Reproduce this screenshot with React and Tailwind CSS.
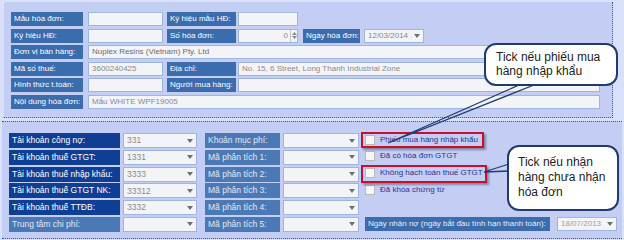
const FONT = { fontFamily: '"Liberation Sans", Arial, sans-serif' };

function TopLabel({ children, w }) {
  return (
    <div
      className="h-[14px] bg-[#3a6cae] text-white text-[8px] leading-[14px] pl-[3px] whitespace-nowrap overflow-hidden shrink-0"
      style={{ width: w }}
    >
      {children}
    </div>
  );
}

function Field({ children, w, right, className = "" }) {
  return (
    <div
      className={
        "h-[14px] bg-[#f3f4f7] border border-[#9db5e0] text-[#8a8a8a] text-[8px] leading-[12px] px-[3px] whitespace-nowrap overflow-hidden shrink-0 flex items-center " +
        className
      }
      style={{ width: w }}
    >
      <span className="flex-1">{children}</span>
      {right}
    </div>
  );
}

function Arrow() {
  return (
    <svg width="6" height="4" viewBox="0 0 6 4" className="shrink-0">
      <path d="M0 0h6L3 4z" fill="#6f6f6f" />
    </svg>
  );
}

function Spinner() {
  return (
    <div className="flex flex-col items-center justify-center gap-[1px] w-[7px] h-full border-l border-[#c8c8c8] ml-[2px]">
      <svg width="5" height="3" viewBox="0 0 5 3">
        <path d="M0 3h5L2.5 0z" fill="#8a8a8a" />
      </svg>
      <svg width="5" height="3" viewBox="0 0 5 3">
        <path d="M0 0h5L2.5 3z" fill="#8a8a8a" />
      </svg>
    </div>
  );
}

function Select({ value, w }) {
  return (
    <div
      className="h-[15px] bg-[#f3f4f7] border border-[#9db5e0] text-[#8a8a8a] text-[8.5px] px-[3px] flex items-center shrink-0"
      style={{ width: w }}
    >
      <span className="flex-1">{value}</span>
      <Arrow />
    </div>
  );
}

function Check({ label }) {
  return (
    <div className="flex items-center gap-[5px] ml-[6px] -mt-[2px]">
      <div className="w-[10px] h-[10px] border border-[#b9b9b9] bg-[#f6f6f6]" />
      <span className="text-[8px] text-[#2b3290] whitespace-nowrap">{label}</span>
    </div>
  );
}

const rows = [
  { l: "Tài khoản công nợ:", v: "331", r: "Khoản mục phí:", c: "Phiếu mua hàng nhập khẩu" },
  { l: "Tài khoản thuế GTGT:", v: "1331", r: "Mã phân tích 1:", c: "Đã có hóa đơn GTGT" },
  { l: "Tài khoản thuế nhập khẩu:", v: "3333", r: "Mã phân tích 2:", c: "Không hạch toán thuế GTGT" },
  { l: "Tài khoản thuế GTGT NK:", v: "33312", r: "Mã phân tích 3:", c: "Đã khóa chứng từ" },
  { l: "Tài khoản thuế TTĐB:", v: "3332", r: "Mã phân tích 4:" },
  { l: "Trung tâm chi phí:", v: "", r: "Mã phân tích 5:", light: true, last: true },
];

export default function App() {
  return (
    <div className="relative w-[624px] h-[240px] overflow-hidden bg-[#d9e0fa] pt-[2px] pl-[2px]" style={FONT}>
      {/* top panel */}
      <div className="ml-[1px] w-[610px] h-[116px] bg-[#c4cef5] border-l border-l-[#eef2ff] border-r border-b border-dotted border-r-[#2a5caa] border-b-[#2a5caa] pl-[7px] pt-[10px] flex flex-col gap-[2.6px]">
        <div className="flex">
          <TopLabel w={72}>Mẫu hóa đơn:</TopLabel>
          <Field w={75} className="ml-[5px]" />
          <div className="ml-[4px]"><TopLabel w={69}>Ký hiệu mẫu HĐ:</TopLabel></div>
          <Field w={60} className="ml-[2px]" />
        </div>
        <div className="flex">
          <TopLabel w={72}>Ký hiệu HĐ:</TopLabel>
          <Field w={75} className="ml-[5px]" />
          <div className="ml-[4px]"><TopLabel w={69}>Số hóa đơn:</TopLabel></div>
          <Field w={60} className="ml-[2px] !pr-0 text-right" right={<Spinner />}>0</Field>
          <div className="ml-[5px]"><TopLabel w={57}>Ngày hóa đơn:</TopLabel></div>
          <Field w={60} className="ml-[4px]" right={<Arrow />}>12/03/2014</Field>
        </div>
        <div className="flex">
          <TopLabel w={72}>Đơn vị bán hàng:</TopLabel>
          <Field w={512} className="ml-[5px] !text-[#6d6d6d]">Nuplex Resins (Vietnam) Pty. Ltd</Field>
        </div>
        <div className="flex">
          <TopLabel w={72}>Mã số thuế:</TopLabel>
          <Field w={75} className="ml-[5px]">3600240425</Field>
          <div className="ml-[4px]"><TopLabel w={69}>Địa chỉ:</TopLabel></div>
          <Field w={362} className="ml-[2px]">No. 15, 6 Street, Long Thanh Industrial Zone</Field>
        </div>
        <div className="flex">
          <TopLabel w={72}>Hình thức t.toán:</TopLabel>
          <Field w={75} className="ml-[5px]" />
          <div className="ml-[4px]"><TopLabel w={69}>Người mua hàng:</TopLabel></div>
          <Field w={362} className="ml-[2px]" />
        </div>
        <div className="flex">
          <TopLabel w={72}>Nội dung hóa đơn:</TopLabel>
          <Field w={512} className="ml-[5px]">Mẫu WHITE WPF19005</Field>
        </div>
      </div>

      {/* bottom panel */}
      <div className="mt-[3px] w-[620px] h-[118px] bg-[#c4cef5] border-t border-b border-dotted border-[#2a5caa] pl-[7px] pt-[11px] flex flex-col gap-[1.8px]">
        {rows.map((r) => (
          <div key={r.l} className="flex items-center h-[15px]">
            <div
              className={
                "w-[111px] h-[15px] text-[8.5px] leading-[15px] pl-[3px] whitespace-nowrap shrink-0 " +
                (r.light ? "bg-[#4a79b6] text-[#e4e8f2]" : "bg-[#0f3f94] text-white")
              }
            >
              {r.l}
            </div>
            <div className="ml-[3px]"><Select value={r.v} w={74} /></div>
            <div className="ml-[8px] w-[75px] h-[15px] bg-[#4a79b6] text-[#e4e8f2] text-[8.5px] leading-[15px] pl-[3px] whitespace-nowrap shrink-0">
              {r.r}
            </div>
            <div className="ml-[3px]"><Select value="" w={76} /></div>
            {r.c && <Check label={r.c} />}
            {r.last && (
              <div className="flex items-center ml-[6px]">
                <div className="w-[185px] h-[14px] bg-[#3a6cae] text-[#e8ecf6] text-[8px] leading-[14px] pl-[3px] whitespace-nowrap">
                  Ngày nhận nợ (ngày bắt đầu tính hạn thanh toán):
                </div>
                <div className="ml-[7px]">
                  <Field w={60} className="!text-[#a0a0a0]" right={<Arrow />}>18/07/2013</Field>
                </div>
              </div>
            )}
          </div>
        ))}
      </div>

      {/* red highlight boxes */}
      <div className="absolute left-[361px] top-[132px] w-[123px] h-[16px] border-2 border-[#c8102e] shadow-[2px_2px_2px_rgba(0,0,0,0.35)]" />
      <div className="absolute left-[361px] top-[165px] w-[126px] h-[18px] border-2 border-[#c8102e] shadow-[2px_2px_2px_rgba(0,0,0,0.35)]" />

      {/* pointers */}
      <svg className="absolute left-0 top-0" width="624" height="240" viewBox="0 0 624 240">
        <polyline points="519,85 388,143 534,85" fill="none" stroke="#1f3b70" strokeWidth="1.3" />
        <polyline points="509,164 484,172 509,171" fill="none" stroke="#1f3b70" strokeWidth="1.3" />
      </svg>

      {/* callouts */}
      <div className="absolute left-[484px] top-[43px] w-[134px] h-[43px] bg-white border-2 border-[#1f3b70] rounded-[12px] pl-[10px] pt-[5px] text-[12px] leading-[14px] text-[#222]">
        Tick nếu phiếu mua
        <br />
        hàng nhập khẩu
      </div>
      <div className="absolute left-[507px] top-[145px] w-[112px] h-[66px] bg-white border-2 border-[#1f3b70] rounded-[12px] pl-[9px] pt-[8px] text-[12px] leading-[15px] text-[#222]">
        Tick nếu nhận
        <br />
        hàng chưa nhận
        <br />
        hóa đơn
      </div>
    </div>
  );
}
